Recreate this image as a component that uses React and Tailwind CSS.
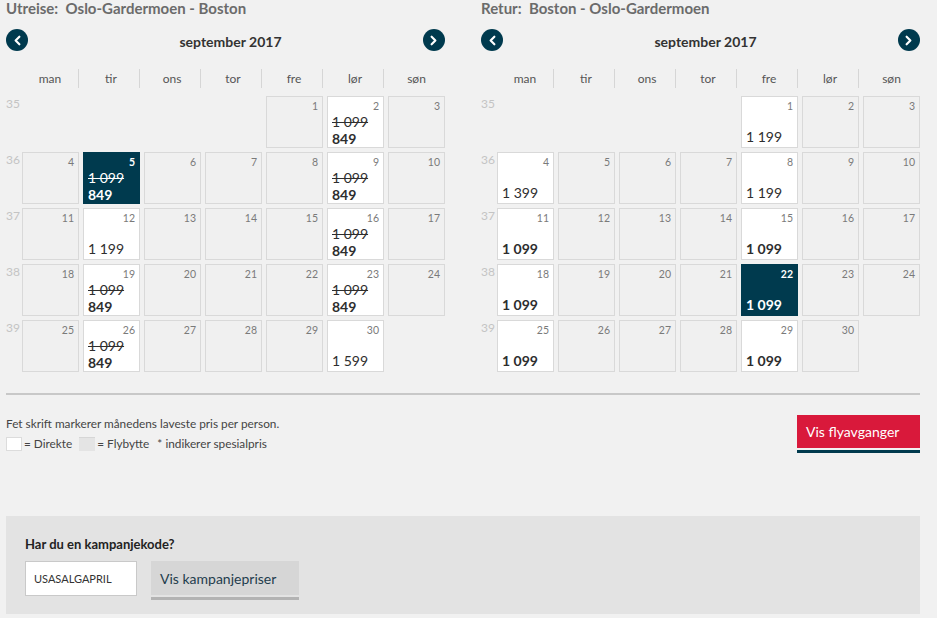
import React from 'react';
import { ChevronLeft, ChevronRight } from 'lucide-react';

const weekdays = ['man', 'tir', 'ons', 'tor', 'fre', 'lør', 'søn'];

// september 2017 starts on a friday (week 35)
const weeks = [
  { no: 35, days: [null, null, null, null, 1, 2, 3] },
  { no: 36, days: [4, 5, 6, 7, 8, 9, 10] },
  { no: 37, days: [11, 12, 13, 14, 15, 16, 17] },
  { no: 38, days: [18, 19, 20, 21, 22, 23, 24] },
  { no: 39, days: [25, 26, 27, 28, 29, 30, null] },
];

const sale = { old: '1 099', price: '849', bold: true };

const outbound = {
  label: 'Utreise:',
  route: 'Oslo-Gardermoen - Boston',
  selected: 5,
  prices: {
    2: sale,
    5: sale,
    9: sale,
    12: { price: '1 199' },
    16: sale,
    19: sale,
    23: sale,
    26: sale,
    30: { price: '1 599' },
  },
};

const inbound = {
  label: 'Retur:',
  route: 'Boston - Oslo-Gardermoen',
  selected: 22,
  prices: {
    1: { price: '1 199' },
    4: { price: '1 399' },
    8: { price: '1 199' },
    11: { price: '1 099', bold: true },
    15: { price: '1 099', bold: true },
    18: { price: '1 099', bold: true },
    22: { price: '1 099', bold: true },
    25: { price: '1 099', bold: true },
    29: { price: '1 099', bold: true },
  },
};

const DayCell = ({ day, info, selected }) => {
  if (!day) return <div />;

  const bg = selected
    ? 'bg-[#003a4e] border-[#003a4e] text-white'
    : info
      ? 'bg-white border-[#d9d9d9] text-[#2e2e2e]'
      : 'bg-[#f0f0f0] border-[#d9d9d9] text-[#2e2e2e]';

  return (
    <div className={`h-[52px] border flex flex-col ${bg}`}>
      <div className={`text-right pr-[4px] pt-[2px] text-[10.5px] leading-[14px] ${selected ? 'text-white font-bold' : 'text-[#7a7a7a]'}`}>
        {day}
      </div>
      {info && (
        <div className="mt-auto pl-[4px] pb-[2px] text-[14px] leading-[17px]">
          {info.old && <div className="line-through">{info.old}</div>}
          <div className={info.bold ? 'font-bold' : ''}>{info.price}</div>
        </div>
      )}
    </div>
  );
};

const NavButton = ({ dir }) => (
  <button className="w-[22px] h-[22px] rounded-full bg-[#003a4e] text-white flex items-center justify-center">
    {dir === 'prev' ? <ChevronLeft size={15} strokeWidth={3.5} /> : <ChevronRight size={15} strokeWidth={3.5} />}
  </button>
);

const Calendar = ({ data }) => (
  <div className="w-[439px]">
    <h3 className="text-[15px] leading-[17px] font-bold text-[#6b6b6b]">
      {data.label}&nbsp; {data.route}
    </h3>

    <div className="mt-[12px] h-[22px] flex items-center justify-between">
      <NavButton dir="prev" />
      <span className="ml-[10px] text-[14px] font-bold text-[#333] pt-[3px]">september 2017</span>
      <NavButton dir="next" />
    </div>

    <div className="mt-[18px] grid grid-cols-[12px_repeat(7,1fr)] gap-x-[4px] h-[19px]">
      <div />
      {weekdays.map((d, i) => (
        <div
          key={d}
          className={`text-center text-[12px] leading-[19px] text-[#555] ${i < 6 ? 'border-r border-[#d6d6d6]' : ''}`}
        >
          {d}
        </div>
      ))}
    </div>

    <div className="mt-[8px] grid grid-cols-[12px_repeat(7,1fr)] gap-x-[4px] gap-y-[4px]">
      {weeks.map(w => (
        <React.Fragment key={w.no}>
          <div className="text-[12px] leading-[14px] pt-[1px] text-[#c4c4c4]">{w.no}</div>
          {w.days.map((d, i) => (
            <DayCell key={i} day={d} info={d && data.prices[d]} selected={d === data.selected} />
          ))}
        </React.Fragment>
      ))}
    </div>
  </div>
);

export default function App() {
  return (
    <div
      className="w-[937px] h-[618px] bg-[#f1f1f1] pl-[6px] pr-[17px] overflow-hidden text-[#333]"
      style={{ fontFamily: 'Lato, "Noto Sans", sans-serif' }}
    >
      <div className="flex justify-between">
        <Calendar data={outbound} />
        <Calendar data={inbound} />
      </div>

      <div className="mt-[21px] h-[2px] bg-[#c8c8c8]" />

      <div className="flex justify-between">
        <div className="pt-[21px] text-[11.8px] text-[#444]">
          <p className="leading-[16px]">Fet skrift markerer månedens laveste pris per person.</p>
          <div className="mt-[4px] flex items-center h-[15px]">
            <span className="w-[16px] h-[14px] bg-white border border-[#dcdcdc]" />
            <span className="ml-[2px]">= Direkte</span>
            <span className="ml-[7px] w-[16px] h-[14px] bg-[#e4e4e4] border-t border-[#d6d6d6]" />
            <span className="ml-[2px]">= Flybytte</span>
            <span className="ml-[8px]">* indikerer spesialpris</span>
          </div>
        </div>

        <div className="pt-[20px]">
          <button className="w-[123px] h-[33px] bg-[#d9193b] text-white text-[14px] text-left pl-[9px] block">
            Vis flyavganger
          </button>
          <div className="mt-[2px] h-[3px] bg-[#003a4e]" />
        </div>
      </div>

      <div className="mt-[63px] h-[98px] bg-[#e3e3e3] pt-[19px] pl-[19px]">
        <h4 className="text-[13px] font-bold text-[#222] leading-[18px]">Har du en kampanjekode?</h4>
        <div className="mt-[8px] flex">
          <input
            readOnly
            value="USASALGAPRIL"
            className="w-[112px] h-[35px] bg-white border border-[#c9c9c9] px-[8px] text-[11px] text-[#333] outline-none"
          />
          <div className="ml-[14px]">
            <button className="w-[148px] h-[34px] bg-[#d6d6d6] text-[14px] text-[#1f3d4d] text-left pl-[9px] block">
              Vis kampanjepriser
            </button>
            <div className="mt-[2px] h-[3px] bg-[#b3b3b3]" />
          </div>
        </div>
      </div>
    </div>
  );
}
